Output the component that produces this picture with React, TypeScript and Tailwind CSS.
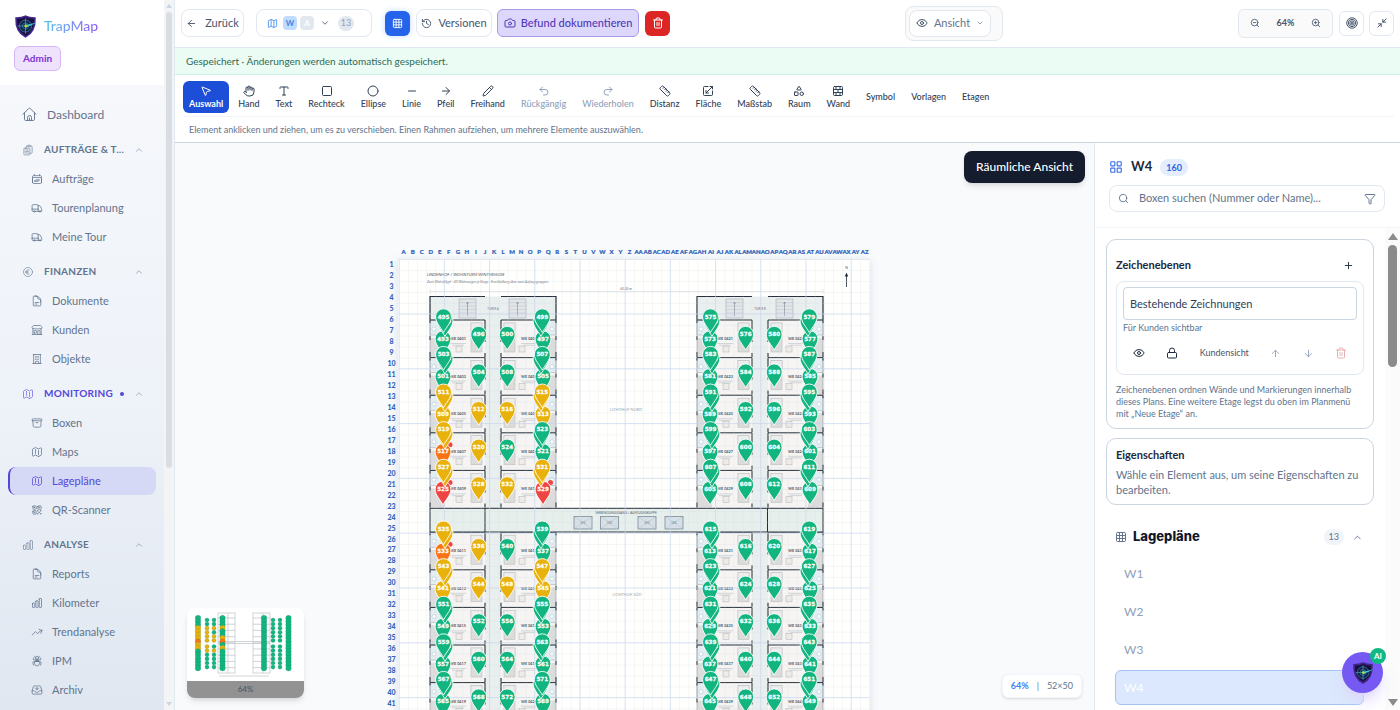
import type { ComponentType, ReactNode } from 'react';
import {
  ArrowDown, ArrowLeft, ArrowRight, ArrowUp, BrickWall, Camera, ChevronDown, ChevronUp, Circle, Eye, Funnel,
  Grid3x3, Hand, History, LayoutGrid, Lock, Map as MapIcon, Minus, MousePointer2, Pencil, Plus,
  Redo2, Ruler, Search, Shapes, Square, Trash2, Type, Undo2, ZoomIn, ZoomOut,
} from 'lucide-react';
import {
  HiOutlineArchiveBox, HiOutlineArrowTrendingUp, HiOutlineBugAnt, HiOutlineBuildingOffice,
  HiOutlineBuildingStorefront, HiOutlineCalendarDays, HiOutlineChartBar, HiOutlineClipboardDocumentList,
  HiOutlineCurrencyEuro, HiOutlineDocumentText, HiOutlineInboxArrowDown, HiOutlineMap,
  HiOutlineQrCode, HiOutlineTruck,
} from 'react-icons/hi2';

type Icon = ComponentType<{ className?: string }>;

function Shield({ className }: { className?: string }) {
  return (
    <svg viewBox="0 0 24 24" className={className} aria-hidden="true">
      <path d="M12 1.2C9 2.8 5.500 3.200 2.200 3.200c-.4 8.500 1.500 15.300 9.800 19.600 8.300-4.300 10.200-11.100 9.800-19.600C18.500 3.200 15 2.800 12 1.200z" fill="#17103a" stroke="#43258c" strokeWidth="1.800" />
      <circle cx="12" cy="11.500" r="6.300" fill="#13204a" stroke="#2f6f98" strokeWidth="1" />
      <circle cx="12" cy="11.500" r="3.200" fill="none" stroke="#2f7fa8" strokeWidth=".8" />
      <path d="M12 3.500v16M4 11.500h10" stroke="#3fa0c0" strokeWidth=".8" />
      <path d="M12 10.500L24 7.800 13 13z" fill="#38c3d6" />
      <circle cx="12.300" cy="11.500" r="1.500" fill="#b6e03a" />
    </svg>
  );
}

function HomeIcon({ className }: { className?: string }) {
  return (
    <svg viewBox="0 0 24 24" className={className} fill="none" stroke="currentColor" strokeWidth="1.500" strokeLinecap="round" strokeLinejoin="round" aria-hidden="true">
      <path d="M1.500 11.500L11 2.300a1.500 1.500 0 012 0l9.500 9.200M4 9.500v10.300c0 1 .7 1.700 1.700 1.700h12.600c1 0 1.700-.7 1.700-1.700V9.500" />
      <path d="M8.800 21.500v-4.700a3.200 3.200 0 016.400 0v4.700M12 21v-3.500" />
    </svg>
  );
}

function TargetIcon({ className }: { className?: string }) {
  return (
    <svg viewBox="0 0 24 24" className={className} fill="none" stroke="currentColor" strokeWidth="2" aria-hidden="true">
      <circle cx="12" cy="12" r="10.500" />
      <circle cx="12" cy="12" r="7.300" />
      <circle cx="12" cy="12" r="4.200" />
      <circle cx="12" cy="12" r="1.200" fill="currentColor" />
    </svg>
  );
}

function CollapseIcon({ className }: { className?: string }) {
  return (
    <svg viewBox="0 0 24 24" className={className} fill="none" stroke="currentColor" strokeWidth="2.400" strokeLinecap="round" strokeLinejoin="round" aria-hidden="true">
      <path d="M22 2l-8 8M14 3.500V10h6.500M2 22l8-8M3.500 14H10v6.500" />
    </svg>
  );
}

function AreaIcon({ className }: { className?: string }) {
  return (
    <svg viewBox="0 0 24 24" className={className} fill="none" stroke="currentColor" strokeWidth="2" strokeLinecap="round" strokeLinejoin="round" aria-hidden="true">
      <path d="M12 3H5a2 2 0 00-2 2v14a2 2 0 002 2h14a2 2 0 002-2v-7M16 3h5v5M21 3L8 16M8 11v5h5" />
    </svg>
  );
}

const groups: { title: string; icon: Icon; active?: boolean; items: { label: string; icon: Icon; active?: boolean }[] }[] = [
  {
    title: 'AUFTRÄGE & T...', icon: HiOutlineClipboardDocumentList,
    items: [
      { label: 'Aufträge', icon: HiOutlineCalendarDays },
      { label: 'Tourenplanung', icon: HiOutlineTruck },
      { label: 'Meine Tour', icon: HiOutlineTruck },
    ],
  },
  {
    title: 'FINANZEN', icon: HiOutlineCurrencyEuro,
    items: [
      { label: 'Dokumente', icon: HiOutlineDocumentText },
      { label: 'Kunden', icon: HiOutlineBuildingStorefront },
      { label: 'Objekte', icon: HiOutlineBuildingOffice },
    ],
  },
  {
    title: 'MONITORING', icon: HiOutlineMap, active: true,
    items: [
      { label: 'Boxen', icon: HiOutlineArchiveBox },
      { label: 'Maps', icon: HiOutlineMap },
      { label: 'Lagepläne', icon: HiOutlineMap, active: true },
      { label: 'QR-Scanner', icon: HiOutlineQrCode },
    ],
  },
  {
    title: 'ANALYSE', icon: HiOutlineChartBar,
    items: [
      { label: 'Reports', icon: HiOutlineDocumentText },
      { label: 'Kilometer', icon: HiOutlineChartBar },
      { label: 'Trendanalyse', icon: HiOutlineArrowTrendingUp },
      { label: 'IPM', icon: HiOutlineBugAnt },
      { label: 'Archiv', icon: HiOutlineInboxArrowDown },
    ],
  },
];

function Sidebar() {
  return (
    <aside className="flex w-[175px] shrink-0 border-r border-slate-200 bg-white">
      <div className="flex min-w-0 flex-1 flex-col">
        <div className="h-[85px] shrink-0 pt-[14px] pl-[14px]">
          <a href="#" className="flex items-center gap-[7px]">
            <Shield className="size-[23px]" />
            <span className="bg-linear-to-r from-[#4cc4ea] to-[#8b5cf6] bg-clip-text text-[14px] leading-6 font-medium text-transparent">TrapMap</span>
          </a>
          <span className="mt-2 inline-flex h-[25px] items-center rounded-md border border-[#d6b8f8] bg-[#efe2fd] px-2 text-[10px] font-bold text-[#7b33d1]">Admin</span>
        </div>
        <nav className="flex-1 bg-linear-to-b from-[#f6f8fb] via-[#eef2f9] to-[#e0e7f0] px-2 pt-[15px]">
          <a href="#" className="mb-[5px] flex h-[29px] items-center gap-[10px] pl-[14px] text-[12px] text-slate-500">
            <HomeIcon className="size-[15px]" />
            Dashboard
          </a>
          {groups.map((g) => (
            <div key={g.title} className="mb-[5px]">
              <button className={g.active ? 'flex h-[31px] w-full items-center pr-3 pl-[14px] text-[#5546d8]' : 'flex h-[31px] w-full items-center pr-3 pl-[14px] text-slate-500'}>
                <g.icon className="size-3 shrink-0 opacity-80" />
                <span className="ml-[10px] text-[10px] font-bold tracking-wide whitespace-nowrap">{g.title}</span>
                {g.active && <i className="ml-auto size-1 rounded-full bg-[#5546d8]" />}
                <ChevronUp className={g.active ? 'ml-[10px] size-[10px] text-slate-400' : 'ml-auto size-[10px] text-slate-400'} />
              </button>
              {g.items.map((it) => (
                <a
                  key={it.label}
                  href="#"
                  className={
                    it.active
                      ? 'mb-px flex h-7 items-center gap-[9px] rounded-lg border-l-2 border-[#5546d8] bg-[#d6d9f6] pl-[21px] text-[11px] text-[#5546d8]'
                      : 'mb-px flex h-7 items-center gap-[9px] pl-[23px] text-[11px] text-slate-500'
                  }
                >
                  <it.icon className="size-3 shrink-0" />
                  {it.label}
                </a>
              ))}
            </div>
          ))}
        </nav>
      </div>
      <div className="flex w-[10px] shrink-0 flex-col items-center justify-between bg-[#f3f4f6]">
        <div className="flex flex-col items-center">
          <i className="my-1 border-x-[3px] border-b-4 border-x-transparent border-b-slate-300" />
          <i className="h-[456px] w-[6px] rounded-full bg-[#dadde1]" />
        </div>
        <i className="mb-1 border-x-[3px] border-t-4 border-x-transparent border-t-slate-300" />
      </div>
    </aside>
  );
}

function TopBar() {
  return (
    <header className="flex h-12 shrink-0 items-center border-b border-slate-200 px-[6px] pb-px text-[11px] text-slate-600">
      <button className="flex h-7 w-[63px] items-center justify-center gap-2 rounded-lg border border-slate-200">
        <ArrowLeft className="size-[11px]" /> Zurück
      </button>
      <button className="ml-3 flex h-7 w-[116px] items-center rounded-lg border border-slate-200 pl-[10px]">
        <MapIcon className="size-[11px] text-[#4b93f0]" />
        <span className="ml-[5px] flex size-[14px] items-center justify-center rounded-sm bg-[#bfdbfe] text-[8px] font-bold text-[#4a86e8]">W</span>
        <span className="ml-[3px] flex size-[14px] items-center justify-center rounded-sm bg-slate-200 text-[8px] font-bold text-white">A</span>
        <ChevronDown className="ml-[6px] size-[10px]" />
        <span className="ml-2 flex h-[15px] w-4 items-center justify-center rounded-full bg-slate-200 text-[9px] text-slate-400">13</span>
      </button>
      <button aria-label="Raster" className="ml-[13px] flex size-[25px] items-center justify-center rounded-md bg-[#2563eb] text-white shadow-[0_0_6px_#bfdbfe]">
        <Grid3x3 className="size-[11px]" />
      </button>
      <button className="ml-[6px] flex h-7 w-[76px] items-center justify-center gap-[6px] rounded-lg border border-slate-200">
        <History className="size-[11px]" /> Versionen
      </button>
      <button className="ml-[5px] flex h-7 w-[142px] items-center justify-center gap-[5px] rounded-md border border-[#a99aea] bg-[#ddd8fb] font-medium text-[#5037b8]">
        <Camera className="size-3" /> Befund dokumentieren
      </button>
      <button aria-label="Löschen" className="ml-[6px] flex size-[25px] items-center justify-center rounded-md bg-[#dc2626] text-white">
        <Trash2 className="size-3" />
      </button>
      <div className="ml-auto flex h-[35px] w-[98px] items-center rounded-lg border border-slate-200 bg-[#fafafa] px-[3px]">
        <button className="flex h-[27px] w-[82px] items-center justify-center gap-[6px] rounded-lg border border-slate-200 bg-white text-slate-500">
          <Eye className="size-3 text-slate-600" /> Ansicht <ChevronDown className="size-2" />
        </button>
      </div>
      <div className="ml-auto flex h-[29px] w-[95px] items-center justify-between rounded-md border border-slate-200 bg-[#fafafa] px-[11px] text-[9px] font-bold">
        <button aria-label="Verkleinern"><ZoomOut className="size-[10px]" /></button>
        64%
        <button aria-label="Vergrößern"><ZoomIn className="size-[10px]" /></button>
      </div>
      <button aria-label="Zentrieren" className="ml-[6px] flex size-[25px] items-center justify-center rounded-md border border-slate-200"><TargetIcon className="size-3" /></button>
      <button aria-label="Vollbild beenden" className="ml-[5px] flex size-[25px] items-center justify-center rounded-md border border-slate-200"><CollapseIcon className="size-[10px]" /></button>
    </header>
  );
}

const tools: { label: string; icon?: Icon; state?: 'active' | 'off' }[] = [
  { label: 'Auswahl', icon: MousePointer2, state: 'active' },
  { label: 'Hand', icon: Hand },
  { label: 'Text', icon: Type },
  { label: 'Rechteck', icon: Square },
  { label: 'Ellipse', icon: Circle },
  { label: 'Linie', icon: Minus },
  { label: 'Pfeil', icon: ArrowRight },
  { label: 'Freihand', icon: Pencil },
  { label: 'Rückgängig', icon: Undo2, state: 'off' },
  { label: 'Wiederholen', icon: Redo2, state: 'off' },
  { label: 'Distanz', icon: Ruler },
  { label: 'Fläche', icon: AreaIcon },
  { label: 'Maßstab', icon: Ruler },
  { label: 'Raum', icon: Shapes },
  { label: 'Wand', icon: BrickWall },
  { label: 'Symbol' },
  { label: 'Vorlagen' },
  { label: 'Etagen' },
];

function ToolBar() {
  return (
    <div className="shrink-0 border-b border-slate-300 pr-[6px] pl-2">
      <div className="flex gap-[2px] border-b border-slate-100 pt-[6px] pb-[3px]">
        {tools.map((t) => (
          <button
            key={t.label}
            className={
              t.state === 'active'
                ? 'flex h-8 flex-col items-center justify-center gap-px rounded-md bg-[#1d4ed8] px-[6px] text-[9px] leading-3 font-bold text-white'
                : t.state === 'off'
                  ? 'flex h-8 flex-col items-center justify-center gap-px px-[7px] text-[9px] leading-3 font-medium text-slate-400'
                  : 'flex h-8 flex-col items-center justify-center gap-px px-[7px] text-[9px] leading-3 font-medium text-slate-700'
            }
          >
            {t.icon && <t.icon className="size-3" />}
            {t.label}
          </button>
        ))}
      </div>
      <p className="pl-[6px] text-[9px] leading-[25px] text-slate-500">
        Element anklicken und ziehen, um es zu verschieben. Einen Rahmen aufziehen, um mehrere Elemente auszuwählen.
      </p>
    </div>
  );
}

const G = '#12b57f';
const Y = '#e8b10b';
const O = '#f97316';
const R = '#ef4444';
const ROW = 37.6;

interface RowColors { lower: string; front: string; inner: string; innerRight: string; right: string; rightLower: string }

const calm: RowColors = { lower: G, front: G, inner: G, innerRight: G, right: G, rightLower: G };

const leftColors: RowColors[] = [
  calm,
  calm,
  { lower: Y, front: Y, inner: Y, innerRight: Y, right: Y, rightLower: Y },
  { lower: O, front: Y, inner: Y, innerRight: G, right: G, rightLower: G },
  { lower: R, front: Y, inner: Y, innerRight: Y, right: Y, rightLower: R },
  { lower: O, front: Y, inner: Y, innerRight: G, right: G, rightLower: G },
  { lower: Y, front: Y, inner: Y, innerRight: Y, right: Y, rightLower: Y },
  calm,
  calm,
  calm,
];

const rowTop = (i: number) => (i < 5 ? 320 + i * ROW : 532.2 + (i - 5) * ROW);

function Pin({ x, y, n, color }: { x: number; y: number; n: number; color: string }) {
  return (
    <g transform={`translate(${x} ${y})`}>
      <path d="M0 16C-2.500 11-7.900 6.300-7.900 .200a7.900 7.900 0 0115.800 0C7.900 6.300 2.500 11 0 16z" fill={color} stroke="#fff" strokeWidth=".9" strokeLinejoin="round" />
      <text y="2" textAnchor="middle" fontSize="5.600" fontWeight="700" fill="#fff" stroke="#fff" strokeWidth=".25" className="font-['DejaVu_Sans',sans-serif]">{n}</text>
    </g>
  );
}

function Room({ x, y, name, flip }: { x: number; y: number; name: string; flip?: boolean }) {
  const bed = flip ? 3 : 41;
  const table = flip ? 18 : 26;
  const bath = flip ? 40 : 0;
  return (
    <g transform={`translate(${x} ${y})`}>
      <rect width="55" height={ROW} fill="#f6f5f4" />
      <rect x={bath} width="15" height="15" fill="#e3eef3" stroke="#9aa1a9" strokeWidth=".5" />
      <rect x={bath} y="18" width="15" height="19" fill="#d6d6d6" opacity=".8" />
      <circle cx={bath + (flip ? 11 : 4)} cy="9" r="2" fill="#fff" stroke="#9db4c8" strokeWidth=".4" />
      <rect x={bed} y="3" width="11" height="29" fill="#dcdcda" stroke="#b4b4b4" strokeWidth=".5" />
      <rect x={bed} y="3" width="11" height="8" fill="#eee" stroke="#b4b4b4" strokeWidth=".4" />
      <rect x={table} y="26" width="6" height="6" fill="#f1ece6" stroke="#bbb" strokeWidth=".6" />
      <text x="28" y="20" textAnchor="middle" fontSize="3.800" fontWeight="700" fill="#4b5563">{name}</text>
      <path d="M20 23.500h16M22 25.200h12" stroke="#c3c6ca" strokeWidth=".7" />
      <path d="M0 0h55" stroke="#27303a" strokeWidth="1" />
      <path d={flip ? 'M0 0v22M0 33v4M55 0v3M55 16v4M55 32v5' : 'M55 0v22M55 33v4M0 0v3M0 16v4M0 32v5'} stroke="#27303a" strokeWidth="1.100" />
      <path d={flip ? 'M55 0v37' : 'M0 0v37'} stroke="#7b838c" strokeWidth=".5" />
    </g>
  );
}

function Building({ x, we }: { x: number; we: number }) {
  return (
    <g>
      <rect x={x} y="296.500" width="126" height="430" fill="#e9eeee" />
      <path d={`M${x} 320v-23.500h55M${x + 71} 296.500h55v23.500`} fill="none" stroke="#27303a" strokeWidth="1.200" />
      {[29, 79].map((d) => (
        <g key={d} stroke="#9ca3af" strokeWidth=".5" fill="none">
          <rect x={x + d} y="299" width="17" height="19" fill="#e2e6e8" />
          <path d={`M${x + d} 302.500h17M${x + d} 306h17M${x + d} 309.500h17M${x + d} 313h17`} opacity=".5" />
          <path d={`M${x + d + 8.5} 316v-14m-1 2l1-2 1 2`} stroke="#6b7280" strokeWidth=".5" />
        </g>
      ))}
      <text x={x + 63} y="309.500" textAnchor="middle" fontSize="3" fill="#6b7280">TURM {x < 600 ? 'A' : 'B'}</text>
      {Array.from({ length: 10 }, (_, i) => (
        <g key={i}>
          <Room x={x} y={rowTop(i)} name={`WE 0${we + i * 2}`} />
          <Room x={x + 71} y={rowTop(i)} name={`WE 0${we + i * 2 + 1}`} flip />
        </g>
      ))}
    </g>
  );
}

function Pins({ x, base, colors }: { x: number; base: number; colors?: RowColors[] }) {
  return (
    <g transform={`translate(${x} 0)`}>
      {Array.from({ length: 10 }, (_, i) => {
        const y = rowTop(i) - 3.5;
        const n = base + i * 8;
        const c = colors ? colors[i] : calm;
        return (
          <g key={i}>
            {(c.lower === O || c.lower === R) && <circle cx="20" cy={y + 15.5} r="2.500" fill={R} />}
            <Pin x={13} y={y + 22} n={n} color={c.lower} />
            <Pin x={15} y={y + 4} n={n + 1} color={c.front} />
            <Pin x={13.5} y={y} n={n + 2} color={c.front} />
            <Pin x={48.7} y={y + 17.5} n={n + 3} color={c.inner} />
            {c.rightLower === R && <circle cx="120.500" cy={y + 15.5} r="2.500" fill={R} />}
            <Pin x={113} y={y + 22} n={n + 4} color={c.rightLower} />
            <Pin x={111} y={y + 4} n={n + 5} color={c.right} />
            <Pin x={112.3} y={y} n={n + 6} color={c.right} />
            <Pin x={77.2} y={y + 17.5} n={n + 7} color={c.innerRight} />
          </g>
        );
      })}
    </g>
  );
}

const columnName = (i: number) => (i < 26 ? '' : 'A') + String.fromCharCode(65 + (i % 26));

function FloorPlan() {
  return (
    <svg viewBox="385 243 500 490" width="500" height="490" className="shrink-0 overflow-visible" role="img" aria-label="Grundriss W4">
      <defs>
        <pattern id="minor" x="399" y="259" width="9.040" height="10.960" patternUnits="userSpaceOnUse">
          <path d="M0 0h9.040M0 0v10.960" stroke="#cfd5dd" strokeWidth=".7" />
        </pattern>
        <pattern id="major" x="398.600" y="258.600" width="45.200" height="54.800" patternUnits="userSpaceOnUse">
          <path d="M0 .500h45.200M.500 0v54.800" stroke="#c3d2f0" strokeWidth=".8" />
        </pattern>
        <filter id="paper" x="-5%" y="-5%" width="110%" height="110%">
          <feDropShadow dx="0" dy="2" stdDeviation="4" floodColor="#64748b" floodOpacity=".22" />
        </filter>
      </defs>
      <rect x="398.500" y="259" width="471" height="490" fill="#fffffd" filter="url(#paper)" />
      <g fontSize="6" fontWeight="900" fill="#2f62b8" stroke="#2f62b8" strokeWidth=".2" textAnchor="middle">
        {Array.from({ length: 52 }, (_, i) => <text key={i} x={403.6 + i * 9.04} y="254.200">{columnName(i)}</text>)}
      </g>
      <g fontSize="7" fontWeight="900" fill="#2f62b8" textAnchor="middle">
        {Array.from({ length: 41 }, (_, i) => <text key={i} x="391.500" y={267 + i * 10.98}>{i + 1}</text>)}
      </g>
      <text x="427" y="275.500" fontSize="4.200" fontStyle="italic" fill="#4b5563">LINDENHOF / WOHNTURM WINTERHUDE</text>
      <text x="427" y="282.500" fontSize="3.500" fontStyle="italic" fill="#6b7280">Zwei Wohnflügel · 40 Wohnungen je Etage · Erschließung über zwei Aufzugsgruppen</text>
      <path d="M430 291.500h393M430 289v5M823 289v5" stroke="#cbd0d6" strokeWidth=".5" />
      <text x="626" y="290" fontSize="3.200" textAnchor="middle" fill="#6b7280">62,00 m</text>
      <text x="846.500" y="269" fontSize="3.500" textAnchor="middle" fill="#4b5563">N</text>
      <path d="M846.500 287v-12" stroke="#1f2937" strokeWidth=".8" />
      <path d="M844.800 276.500l1.700-4 1.700 4z" fill="#1f2937" />
      <Building x={430} we={401} />
      <Building x={697} we={421} />
      <rect x="430" y="508.300" width="393" height="23.700" fill="#e7efec" stroke="#27303a" strokeWidth="1" />
      <path d="M485 508v24M767.500 508v24" stroke="#27303a" strokeWidth="1" />
      <text x="626" y="513.500" fontSize="3.200" textAnchor="middle" fill="#4b5563">VERBINDUNGSGANG / AUFZUGSGRUPPE</text>
      {[574, 600.5, 638, 665].map((x, i) => (
        <g key={x}>
          <rect x={x} y="516.500" width="18" height="12.500" fill="#d6e0e6" stroke="#6b7d8c" strokeWidth=".7" />
          <path d={`M${x} 516.500l18 12.500M${x + 18} 516.500l-18 12.500`} stroke="#a9b6c0" strokeWidth=".4" />
          <text x={x + 9} y="524" fontSize="3" textAnchor="middle" fill="#5b6b79">LF{i + 1}</text>
        </g>
      ))}
      <text x="626" y="411" fontSize="4" textAnchor="middle" fill="#9ca3af">LICHTHOF NORD</text>
      <text x="627" y="596" fontSize="4" textAnchor="middle" fill="#9ca3af">LICHTHOF SÜD</text>
      <rect x="398.500" y="259" width="471" height="490" fill="url(#minor)" opacity=".6" />
      <rect x="398.500" y="259" width="471" height="490" fill="url(#major)" opacity=".7" />
      <Pins x={430} base={493} colors={leftColors} />
      <Pins x={697} base={573} />
    </svg>
  );
}

function MiniMap() {
  const cols: { x: number; r: number; colors: string }[] = [
    { x: 11, r: 2.8, colors: 'GGGYYYYOYYGGGGGG' },
    { x: 20, r: 2.1, colors: 'GGYYYYYYGGGG' },
    { x: 27, r: 2.1, colors: 'GGYGYYGYGGGG' },
    { x: 35.5, r: 2.8, colors: 'GGGYGGYOGYGGGGGG' },
    { x: 77, r: 2.8, colors: 'GGGGGGGGGGGGGGGG' },
    { x: 86, r: 2.1, colors: 'GGGGGGGGGGGG' },
    { x: 93, r: 2.1, colors: 'GGGGGGGGGGGG' },
    { x: 101.5, r: 2.8, colors: 'GGGGGGGGGGGGGGGG' },
  ];
  const fill: Record<string, string> = { G, Y, O };
  return (
    <div className="absolute bottom-3 left-3 w-[117px] overflow-hidden rounded-lg bg-white shadow-md">
      <svg viewBox="0 0 117 73" className="block w-full" aria-hidden="true">
        <g fill="none" stroke="#c4c8cc" strokeWidth=".8">
          {[31, 66].map((x) => (
            <g key={x}>
              <rect x={x} y="5" width="17" height="60" />
              <path d={`M${x + 10} 5v60`} />
              {[0, 1, 2, 3, 4, 5, 6, 7, 8].map((k) => <path key={k} d={`M${x} ${10 + k * 6.2}h17`} />)}
            </g>
          ))}
          <path d="M31 33.500h52M31 35.500h52M32 68h50" />
        </g>
        {cols.map((c) =>
          c.colors.split('').map((k, i) => {
            const y = c.colors.length === 16 ? 10 + i * 3.35 : 12 + i * 4.1 + (i > 5 ? 2 : 0);
            return <circle key={`${c.x}-${i}`} cx={c.x} cy={y} r={c.r} fill={fill[k]} stroke="#0b7a58" strokeOpacity=".4" strokeWidth=".4" />;
          }),
        )}
      </svg>
      <div className="bg-[#929292] text-center text-[8px] leading-[17px] text-slate-600">64%</div>
    </div>
  );
}

function Canvas() {
  return (
    <main className="relative min-w-0 flex-1 overflow-hidden bg-[#f8fafc]">
      <div className="absolute inset-x-0 top-[100px] flex justify-center"><FloorPlan /></div>
      <button className="absolute top-2 right-[9px] h-8 rounded-lg bg-[#141c2e] px-3 text-[12px] font-medium text-white shadow-md">Räumliche Ansicht</button>
      <MiniMap />
      <div className="absolute right-3 bottom-3 flex h-6 items-center gap-2 rounded-md border border-slate-100 bg-white px-2 text-[9px] text-slate-500 shadow-sm">
        <b className="font-bold text-[#3b82f6]">64%</b><span>|</span><span>52×50</span>
      </div>
    </main>
  );
}

function IconButton({ label, children, className }: { label: string; children: ReactNode; className?: string }) {
  return <button aria-label={label} className={className}>{children}</button>;
}

function Inspector() {
  return (
    <aside className="flex w-[306px] shrink-0 flex-col overflow-hidden border-l border-slate-200 bg-white text-slate-800">
      <div className="shrink-0 border-b border-slate-100 pt-[14px] pr-[15px] pb-[15px] pl-[14px]">
        <div className="flex h-5 items-center gap-2">
          <LayoutGrid className="size-[14px] text-[#3b6fe8]" />
          <h2 className="text-[13px] font-bold">W4</h2>
          <span className="rounded-full bg-[#e4edfe] px-[6px] text-[9px] leading-[17px] font-bold text-[#2f66dc]">160</span>
        </div>
        <div className="mt-2 flex h-[27px] items-center rounded-lg border border-slate-200 px-2">
          <Search className="size-[11px] text-slate-500" />
          <input aria-label="Boxen suchen" placeholder="Boxen suchen (Nummer oder Name)..." className="ml-[10px] min-w-0 flex-1 text-[11px] outline-none placeholder:text-slate-500" />
          <Funnel className="size-3 text-slate-500" />
        </div>
      </div>
      <div className="flex min-h-0 flex-1">
        <div className="min-w-0 flex-1 overflow-hidden pt-[11px] pr-[11px] pl-[11px]">
          <section className="rounded-[10px] border border-slate-300 px-[9px] pt-[15px] pb-2">
            <div className="flex h-5 items-center justify-between pr-[10px]">
              <h3 className="text-[11px] font-bold">Zeichenebenen</h3>
              <IconButton label="Ebene hinzufügen"><Plus className="size-[11px]" /></IconButton>
            </div>
            <div className="mt-[6px] rounded-lg border border-slate-200 px-[6px] pt-[5px] pb-1">
              <input aria-label="Ebenenname" defaultValue="Bestehende Zeichnungen" className="h-[33px] w-full rounded-sm border border-slate-300 px-[6px] text-[11px] text-slate-700 outline-none" />
              <p className="text-[9px] leading-4 text-slate-500">Für Kunden sichtbar</p>
              <div className="flex h-[34px] items-center justify-between px-[10px]">
                <IconButton label="Sichtbarkeit"><Eye className="size-3" /></IconButton>
                <IconButton label="Sperren"><Lock className="size-3" /></IconButton>
                <button className="text-[9px] text-slate-600">Kundensicht</button>
                <IconButton label="Nach oben" className="text-slate-400"><ArrowUp className="size-[11px]" /></IconButton>
                <IconButton label="Nach unten" className="text-slate-400"><ArrowDown className="size-[11px]" /></IconButton>
                <IconButton label="Ebene löschen" className="text-[#eab0b0]"><Trash2 className="size-3" /></IconButton>
              </div>
            </div>
            <p className="mt-[9px] text-[9px] leading-3 text-slate-500">
              Zeichenebenen ordnen Wände und Markierungen innerhalb dieses Plans. Eine weitere Etage legst du oben im Planmenü mit „Neue Etage“ an.
            </p>
          </section>
          <section className="mt-[9px] rounded-[10px] border border-slate-300 px-[9px] pt-2 pb-[7px]">
            <h3 className="text-[11px] leading-4 font-bold">Eigenschaften</h3>
            <p className="mt-1 text-[11px] leading-[15px] text-slate-500">Wähle ein Element aus, um seine Eigenschaften zu bearbeiten.</p>
          </section>
          <section className="px-[9px] pt-5">
            <button className="flex h-6 w-full items-center pr-[2px]">
              <Grid3x3 className="size-3 text-slate-500" />
              <span className="ml-[6px] font-['Inter',sans-serif] text-[13px] font-extrabold text-slate-900">Lagepläne</span>
              <span className="ml-auto rounded-full bg-slate-100 px-[5px] text-[9px] leading-4 text-slate-500">13</span>
              <ChevronUp className="ml-2 size-[11px] text-slate-500" />
            </button>
            <div className="mt-[7px] flex flex-col gap-[3px] pr-px text-[12px] text-slate-400">
              <a href="#" className="flex h-[35px] items-center pl-[9px]">W1</a>
              <a href="#" className="flex h-[35px] items-center pl-[9px]">W2</a>
              <a href="#" className="flex h-[35px] items-center pl-[9px]">W3</a>
              <a href="#" className="flex h-[35px] items-center rounded-md border border-[#a3c4f3] bg-[#dbe8fd] pl-2 text-white">W4</a>
            </div>
          </section>
        </div>
        <div className="flex w-[15px] shrink-0 flex-col items-center justify-between bg-[#fbfbfb] pt-[5px]">
          <div className="flex flex-col items-center">
            <i className="border-x-[5px] border-b-[7px] border-x-transparent border-b-[#8b8b8b]" />
            <i className="mt-[5px] h-[122px] w-[9px] rounded-full bg-[#8b8b8b]" />
          </div>
          <i className="mb-1 border-x-[5px] border-t-[7px] border-x-transparent border-t-[#8b8b8b]" />
        </div>
      </div>
    </aside>
  );
}

export default function App() {
  return (
    <div className="relative flex h-screen overflow-hidden bg-white font-['Lato',sans-serif]">
      <Sidebar />
      <div className="flex min-w-0 flex-1 flex-col">
        <TopBar />
        <div className="shrink-0 border-b border-[#cdeee0] bg-[#eafcf4] px-[11px] text-[10px] leading-[26px] text-[#2f6b57]">
          Gespeichert · Änderungen werden automatisch gespeichert.
        </div>
        <ToolBar />
        <div className="flex min-h-0 flex-1">
          <Canvas />
          <Inspector />
        </div>
      </div>
      <button aria-label="KI-Assistent" className="absolute right-[17px] bottom-[17px] flex size-[41px] items-center justify-center rounded-full bg-[#7659f2] shadow-lg shadow-violet-200">
        <Shield className="size-[22px]" />
        <span className="absolute -top-[4px] -right-[3px] flex size-4 items-center justify-center rounded-full bg-[#10b981] text-[8px] font-bold text-white">AI</span>
      </button>
    </div>
  );
}
